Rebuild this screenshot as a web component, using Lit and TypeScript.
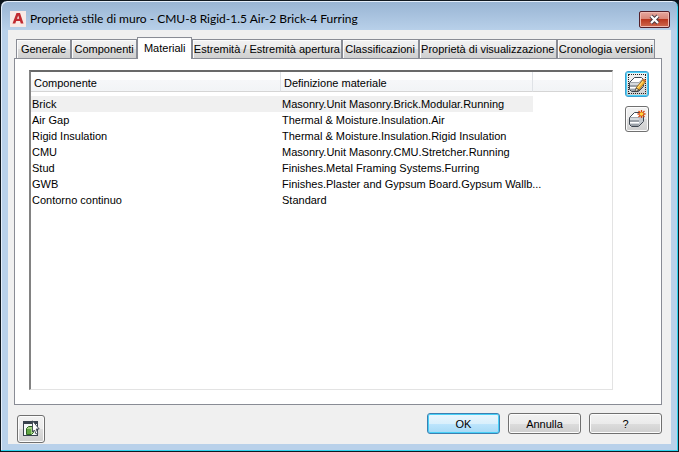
import { LitElement, html, css, svg } from "lit";
import { customElement, state } from "lit/decorators.js";
import { classMap } from "lit/directives/class-map.js";

const tabs = [
  "Generale",
  "Componenti",
  "Materiali",
  "Estremità / Estremità apertura",
  "Classificazioni",
  "Proprietà di visualizzazione",
  "Cronologia versioni",
];

const materials: [string, string][] = [
  ["Brick", "Masonry.Unit Masonry.Brick.Modular.Running"],
  ["Air Gap", "Thermal & Moisture.Insulation.Air"],
  ["Rigid Insulation", "Thermal & Moisture.Insulation.Rigid Insulation"],
  ["CMU", "Masonry.Unit Masonry.CMU.Stretcher.Running"],
  ["Stud", "Finishes.Metal Framing Systems.Furring"],
  ["GWB", "Finishes.Plaster and Gypsum Board.Gypsum Wallb..."],
  ["Contorno continuo", "Standard"],
];

const slab = svg`
  <path d="M1.5 7.5 L6.5 2.5 H15.5 V11.5 L10.5 16.5 H1.5 Z" fill="#fff"/>
  <path d="M2 8 H11 V10 H2 Z M2 13 H11 V14 H2 Z" fill="#d5d9dd"/>
  <path d="M2 10 H11 V12 H2 Z M2 14 H11 V16 H2 Z" fill="#9ba1a8"/>
  <path d="M11 8 L15 4 V12 L11 16 Z" fill="#c3c8ce"/>
  <path d="M1.5 7.5 L6.5 2.5 H13.5 L15.5 4.5 V11.5 L10.5 16.5 H3.5 L1.5 14.5 Z" fill="none" stroke="#3f4751"/>
  <path d="M2 7.5 H11 L15 4" fill="none" stroke="#8b929a" stroke-width=".8"/>`;

const editIcon = html`<svg width="18" height="18" viewBox="0 0 18 18" aria-hidden="true">
  ${slab}
  <path d="M8 13 L14.5 5 L17.2 7.2 L11 15 Z" fill="#f9b732" stroke="#8a5a18" stroke-width=".8"/>
  <path d="M9.2 13.3 L15.3 5.8" stroke="#ffe58a"/>
  <path d="M14.5 5 L15.8 3.6 L18 5.6 L17.2 7.2 Z" fill="#d9702a"/>
  <path d="M8 13 L11 15 L7 16.8 Z" fill="#fff0c8" stroke="#2b2b2b" stroke-width=".7"/>
</svg>`;

const newIcon = html`<svg width="18" height="18" viewBox="0 0 18 18" aria-hidden="true">
  ${slab}
  <path d="M13.5 0 V8 M9.5 4 H17.5 M10.5 1 L16.5 7 M16.5 1 L10.5 7" stroke="#d8480f" stroke-width="1.3"/>
  <circle cx="13.5" cy="4" r="1.8" fill="#ffd83c"/>
</svg>`;

const pickIcon = html`<svg width="18" height="18" viewBox="0 0 18 18" aria-hidden="true">
  <rect x="1.5" y="1.5" width="14" height="14" fill="#f4f7f8" stroke="#38424d"/>
  <rect x="1" y="1" width="15" height="3" fill="#38424d"/>
  <path d="M4.5 8.5 L6.5 6.5 H11.5 V12.5 L9.5 14.5 H4.5 Z" fill="#a5d487" stroke="#2d6420"/>
  <path d="M5 9 H9 V14 H5 Z" fill="#63a644"/>
  <path d="M10.5 .8 V12 L12.5 10 L14 14 L15.8 13.2 L14.2 9 H17.2 Z" fill="#fff" stroke="#38424d" stroke-width=".9"/>
</svg>`;

@customElement("app-root")
export class AppRoot extends LitElement {
  @state() private tab = 2;
  @state() private row = 0;

  static styles = css`
    :host {
      display: block;
      background: #0b141c;
      font: 11px/16px "Liberation Sans", Arial, sans-serif;
      color: #000;
    }
    * { box-sizing: border-box; }
    button { font: inherit; color: inherit; margin: 0; padding: 0; }
    svg { flex: none; }
    .window {
      display: flex;
      flex-direction: column;
      min-height: 100vh;
      padding: 0 6px 7px;
      border: 1px solid #101820;
      border-radius: 7px 7px 0 0;
      background: linear-gradient(#98b4d3 0, #b9d1ea 30px);
      box-shadow: inset -1px -1px #2fd3ee, inset 1px 1px #e4eefa;
    }
    .titlebar {
      display: flex;
      align-items: center;
      height: 29px;
      gap: 4px;
      padding: 7px 2px 0 3px;
    }
    .title {
      flex: 1;
      margin: 0;
      font: 12px/16px Lato, "Open Sans", sans-serif;
      white-space: nowrap;
      overflow: hidden;
    }
    .close {
      display: flex;
      align-items: center;
      justify-content: center;
      width: 31px;
      height: 17px;
      border: 1px solid #53202a;
      border-radius: 2px;
      background: linear-gradient(#e5a79f 0, #d98576 48%, #b9371f 50%, #cf6a50 100%);
      box-shadow: inset 0 0 0 1px #f0b9b0;
    }
    .client {
      flex: 1;
      display: flex;
      flex-direction: column;
      margin: 0 1px;
      padding: 7px 9px 1px 6px;
      background: #f0f0f0;
    }
    .tabs {
      display: grid;
      grid-template-columns: 55fr 66fr 55fr 149fr 77fr 138fr 98fr;
      align-items: end;
      height: 21px;
      padding: 0 7px 0 2px;
    }
    .tab {
      height: 19px;
      border: 1px solid #898c95;
      border-bottom: 0;
      background: linear-gradient(#f2f2f2 0, #ebebeb 50%, #dcdcdc 51%, #cfcfcf 100%);
      box-shadow: inset 1px 1px #fcfcfc;
      white-space: nowrap;
    }
    .tab.active {
      position: relative;
      height: 22px;
      margin-bottom: -1px;
      padding: 0 0 2px;
      background: #fff;
    }
    .panel {
      flex: 1;
      display: flex;
      gap: 12px;
      padding: 11px 12px 14px 14px;
      border: 1px solid #898c95;
      background: #fff;
    }
    .list {
      flex: 1;
      min-width: 0;
      border: 1px solid #e3e3e3;
      border-top: 2px solid #696969;
      border-left: 2px solid #828282;
    }
    table { width: 100%; table-layout: fixed; border-collapse: separate; border-spacing: 0; }
    .name { width: 250px; }
    .definition { width: 252px; }
    th {
      height: 20px;
      padding: 2px 3px 0;
      border-right: 1px solid #dfe2e6;
      border-bottom: 1px solid #d5d5d5;
      background: linear-gradient(#fff 0, #fff 8px, #f6f7f9 8px, #f2f4f6 100%);
      font-weight: normal;
      text-align: left;
    }
    th:last-child { border-right: 0; }
    .gap td { height: 4px; padding: 0; }
    td { height: 16px; padding: 0 0 0 1px; white-space: nowrap; }
    .selected .cell { background: #f0f0f0; }
    .tools { display: flex; flex-direction: column; gap: 9px; padding: 1px 0 0; }
    .button {
      display: flex;
      align-items: center;
      justify-content: center;
      border: 1px solid #707070;
      border-radius: 3px;
      background: linear-gradient(#f2f2f2 0, #ebebeb 50%, #dddddd 50%, #cfcfcf 100%);
      box-shadow: inset 0 0 0 1px #fcfcfc;
    }
    .tool { width: 24px; height: 26px; }
    .focused {
      border-color: #3c9fd1;
      box-shadow: inset 0 0 0 1px #48d0f7;
    }
    .ring { display: flex; align-items: center; justify-content: center; width: 18px; height: 20px; border: 1px dotted #222; }
    .footer { display: flex; align-items: flex-start; gap: 8px; padding: 8px 0 0; }
    .pick { width: 28px; height: 28px; margin: 2px auto 0 3px; }
    .action { width: 73px; height: 21px; }
    .default {
      border-color: #3c7fb1;
      background: linear-gradient(#eaf6fd 0, #d9f0fc 50%, #bee6fd 50%, #a7d9f5 100%);
      box-shadow: inset 0 0 0 1px #48d0f7;
    }
  `;

  render() {
    return html`<main class="window">
      <header class="titlebar">
        <svg width="16" height="16" viewBox="0 0 16 16" aria-hidden="true">
          <rect width="16" height="16" fill="#f8e9e6"/>
          <path d="M2.5 12.5 L6.5 2 H10 L13.5 12.5 H10.8 L10 10 H6.2 L5.3 12.5 Z M7 7.8 H9.2 L8.2 4.5 Z" fill="#c02a31" fill-rule="evenodd"/>
        </svg>
        <h1 class="title">Proprietà stile di muro - CMU-8 Rigid-1.5 Air-2 Brick-4 Furring</h1>
        <button class="close" aria-label="Chiudi">
          <svg width="13" height="11" viewBox="0 0 13 11" aria-hidden="true">
            <path d="M3 2 L10 9 M10 2 L3 9" stroke="#4b3a42" stroke-width="4"/>
            <path d="M3 2 L10 9 M10 2 L3 9" stroke="#fff" stroke-width="2.2"/>
          </svg>
        </button>
      </header>
      <section class="client">
        <div class="tabs" role="tablist">
          ${tabs.map(
            (label, i) => html`<button role="tab" aria-selected=${i === this.tab}
              class=${classMap({ tab: true, active: i === this.tab })}
              @click=${() => (this.tab = i)}>${label}</button>`
          )}
        </div>
        <div class="panel" role="tabpanel">
          <div class="list">
            <table>
              <colgroup><col class="name"><col class="definition"><col></colgroup>
              <thead><tr><th>Componente</th><th>Definizione materiale</th><th></th></tr></thead>
              <tbody>
                <tr class="gap"><td colspan="3"></td></tr>
                ${materials.map(
                  ([name, definition], i) => html`<tr class=${classMap({ selected: i === this.row })}
                    @click=${() => (this.row = i)}>
                    <td class="cell">${name}</td><td class="cell">${definition}</td><td></td>
                  </tr>`
                )}
              </tbody>
            </table>
          </div>
          <div class="tools">
            <button class="button tool focused" aria-label="Modifica materiale"><span class="ring">${editIcon}</span></button>
            <button class="button tool" aria-label="Nuovo materiale">${newIcon}</button>
          </div>
        </div>
        <footer class="footer">
          <button class="button pick" aria-label="Seleziona oggetti">${pickIcon}</button>
          <button class="button action default">OK</button>
          <button class="button action">Annulla</button>
          <button class="button action" aria-label="Guida">?</button>
        </footer>
      </section>
    </main>`;
  }
}
